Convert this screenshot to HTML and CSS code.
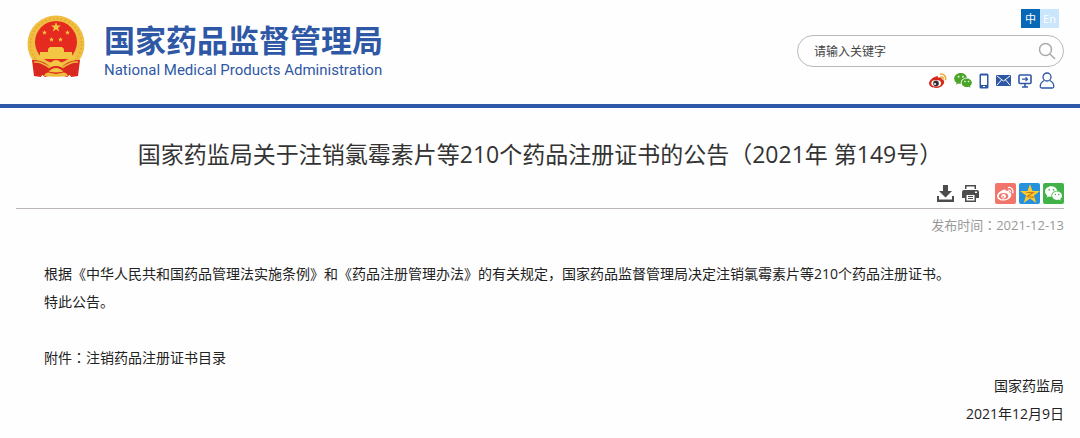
FILE: index.html
```
<!DOCTYPE html>
<html lang="zh-CN">
<head>
  <meta charset="UTF-8" />
  <meta name="viewport" content="width=device-width, initial-scale=1" />
  <title>国家药品监督管理局</title>
  <link rel="stylesheet" href="styles.css">
</head>
<body>

  <!-- Shared symbols -->
  <svg class="symbols" aria-hidden="true">
    <symbol id="star" viewBox="0 0 20 20">
      <path d="M10 0l2.500 7H20l-6 4.500 2.300 7.500L10 14.500 3.700 19 6 11.500 0 7h7.500z" />
    </symbol>
    <symbol id="wechat" viewBox="0 0 20 17">
      <path fill-rule="evenodd" d="M7.500 0C3.400 0 0 2.700 0 6.200c0 2 1.100 3.700 2.800 4.800L2 13.200l2.700-1.300c.9.300 1.900.4 2.900.4-.8-4 2.500-6.900 6.900-6.900C13.900 2.300 11 0 7.500 0zM5 3.200a1 1 0 110 2 1 1 0 010-2zm5 0a1 1 0 110 2 1 1 0 010-2z" />
      <path fill-rule="evenodd" d="M14.200 6.200c-3.300 0-5.800 2.200-5.800 4.900s2.500 4.900 5.800 4.900c.8 0 1.500-.1 2.200-.4l2.100 1.200-.6-2c1.300-.9 2.100-2.200 2.100-3.700 0-2.700-2.500-4.900-5.800-4.900zm-2 2.500a.9.900 0 110 1.800.9.900 0 010-1.800zm4 0a.9.900 0 110 1.800.9.900 0 010-1.800z" />
    </symbol>
  </svg>

  <!-- Header -->
  <header class="header">
    <a class="logo" href="#">
      <svg class="emblem" viewBox="7 5 58 62" aria-hidden="true">
        <path fill="#d9281f" d="M15 46l-1 20 7-2 4 3 11-3 11 3 4-3 7 2-1-20z" />
        <circle cx="36" cy="34" r="28.500" fill="#f0bf42" />
        <circle cx="36" cy="34" r="25.500" fill="none" stroke="#e5ae38" stroke-width="2" stroke-dasharray="2 2" />
        <circle cx="36" cy="32" r="21" fill="#e52a20" />
        <g fill="#f3c744">
          <use href="#star" x="31" y="12" width="10" height="10" />
          <use href="#star" x="22" y="20" width="5" height="5" />
          <use href="#star" x="45" y="20" width="5" height="5" />
          <use href="#star" x="29" y="27" width="5" height="5" />
          <use href="#star" x="38" y="27" width="5" height="5" />
          <path d="M28 39l2-2h12l2 2v3h8v4h3v3H17v-3h3v-4h8z" />
        </g>
        <path fill="#d9281f" d="M12 50c8 0 13 2 18 7l-4 6c-3 0-4 2-5 4l-7-1zM60 50c-8 0-13 2-18 7l4 6c3 0 4 2 5 4l7-1z" />
        <path fill="none" stroke="#eebb3c" stroke-width="1.500" d="M14 52c7-1 12 3 16 6M58 52c-7-1-12 3-16 6" />
        <circle cx="36" cy="56" r="6" fill="#f3c744" />
        <path fill="none" stroke="#d9281f" stroke-width="2" d="M27 62c3-4 6-5 9-5s6 1 9 5" />
        <path fill="#eebb3c" d="M24 66c1-4 5-4 7-3l5 1 5-1c2-1 6-1 7 3-6 1-18 1-24 0z" />
      </svg>
      <span class="logo-text">
        <span class="logo-cn">国家药品监督管理局</span>
        <span class="logo-en">National Medical Products Administration</span>
      </span>
    </a>

    <div class="tools">
      <div class="lang">
        <a class="active" href="#">中</a>
        <a href="#">En</a>
      </div>

      <form class="search">
        <input type="text" aria-label="请输入关键字" placeholder="请输入关键字">
        <button type="button" aria-label="搜索">
          <svg width="18" height="18" viewBox="0 0 18 18" fill="none" stroke="#aaa" stroke-width="1.500">
            <circle cx="7.500" cy="7.500" r="6" />
            <path d="M12 12l5 5" />
          </svg>
        </button>
      </form>

      <nav class="links">
        <a href="#" aria-label="微博">
          <svg width="18" height="16" viewBox="0 0 18 16">
            <path fill="#d4291e" d="M7 3.500c1.600-.6 2.600 0 2.300 1.400 2-.7 3.700-.5 3.500 1.300 2 .6 2.900 2 2.200 4C13.800 13.300 10.500 15 7 15c-3.600 0-6.800-1.700-7-4.700C0 7.500 3.700 4.500 7 3.500z" />
            <ellipse cx="7.200" cy="10.300" rx="4.800" ry="3.200" fill="#fff" />
            <circle cx="7" cy="10.400" r="2.800" fill="#3a3030" />
            <circle cx="6" cy="11" r="1" fill="#fff" />
            <path fill="none" stroke="#efaa36" stroke-width="1.500" d="M11 1.200c3.700-.8 6.600 2.300 5.400 6M11.500 3.700c1.900-.3 3.100 1 2.600 2.800" />
          </svg>
        </a>
        <a href="#" aria-label="微信">
          <svg width="18" height="15" fill="#4aa528"><use href="#wechat" /></svg>
        </a>
        <a href="#" aria-label="手机版">
          <svg width="10" height="16" viewBox="0 0 10 16">
            <rect width="9" height="15" x=".5" y=".5" rx="1.500" fill="#2e58a6" />
            <path fill="#fff" d="M2 2.500h6V12H2zM4 13h2v1H4z" />
          </svg>
        </a>
        <a href="#" aria-label="邮箱">
          <svg width="15" height="11" viewBox="0 0 15 11">
            <rect width="15" height="11" rx="1" fill="#2e58a6" />
            <path fill="none" stroke="#fff" d="M1 1l6.500 5L14 1M1 10l4.500-5M14 10L9.500 5" />
          </svg>
        </a>
        <a href="#" aria-label="电脑版">
          <svg width="14" height="14" viewBox="0 0 14 14" fill="none" stroke="#2e58a6">
            <rect x="1" y="1" width="12" height="8.500" rx="1" stroke-width="1.600" />
            <path stroke-width="1.200" d="M4 5.200h5M7.500 3.300l2 1.900-2 1.900" />
            <path stroke-width="1.600" d="M7 10v3M4 13h6" />
          </svg>
        </a>
        <a href="#" aria-label="个人中心">
          <svg width="16" height="17" viewBox="0 0 16 17" fill="none" stroke="#2e58a6" stroke-width="1.300">
            <circle cx="8" cy="5" r="4" />
            <path d="M5.300 8.500C2.500 9.800 1.200 12 1.200 14.500c0 1 .6 1.500 1.500 1.500h10.600c.9 0 1.500-.5 1.500-1.500 0-2.500-1.300-4.700-4.100-6" />
          </svg>
        </a>
      </nav>
    </div>
  </header>

  <!-- Article -->
  <main class="article">
    <h1>国家药监局关于注销氯霉素片等210个药品注册证书的公告（2021年 第149号）</h1>

    <div class="actions">
      <button type="button" aria-label="下载">
        <svg width="17" height="17" viewBox="0 0 17 17" fill="#4c4c4c">
          <path d="M6 0h5v6h4l-6.500 6.500L2 6h4z" />
          <path d="M0 11h2v3.500h13V11h2v6H0z" />
        </svg>
      </button>
      <button class="print" type="button" aria-label="打印">
        <svg width="17" height="17" viewBox="0 0 17 17">
          <path fill="#4c4c4c" d="M3 0h11v4H3zM2 5h13q2 0 2 2v6h-3v4H3v-4H0V7q0-2 2-2z" />
          <path fill="#fff" d="M4.500 1.500h8V4h-8zM4.500 10h8v5.500h-8zM13 6.500h2V8h-2z" />
          <path stroke="#4c4c4c" d="M6 11.500h5M6 13.500h5" />
        </svg>
      </button>
      <button class="share weibo" type="button" aria-label="分享到微博">
        <svg width="17" height="16" viewBox="0 0 18 16">
          <path fill="#fff" d="M7 3.500c1.600-.6 2.600 0 2.300 1.400 2-.7 3.700-.5 3.500 1.300 2 .6 2.900 2 2.200 4C13.800 13.300 10.500 15 7 15c-3.600 0-6.800-1.700-7-4.700C0 7.500 3.700 4.500 7 3.500z" />
          <ellipse cx="7" cy="10.300" rx="5" ry="3.300" fill="#f1756a" />
          <circle cx="7" cy="10.500" r="2.500" fill="#fff" />
          <circle cx="6.500" cy="11" r="1" fill="#f1756a" />
          <path fill="none" stroke="#fff" stroke-width="1.400" d="M11.500 1.200c3.700-.8 6.200 2.300 5 6M12 3.900c1.600-.3 2.500.8 2.100 2.300" />
        </svg>
      </button>
      <button class="share qzone" type="button" aria-label="分享到QQ空间">
        <svg width="20" height="20" viewBox="0 0 20 20">
          <use href="#star" fill="#fdc92e" />
          <path fill="none" stroke="#c77b16" stroke-width="1.200" d="M6.500 8.500H13L7.500 12.500q4 1 7 .5" />
        </svg>
      </button>
      <button class="share weixin" type="button" aria-label="分享到微信">
        <svg width="17" height="15" fill="#fff"><use href="#wechat" /></svg>
      </button>
    </div>

    <p class="date">发布时间<span class="colon" lang="zh-TW">：</span>2021-12-13</p>

    <div class="content">
      <p>根据《中华人民共和国药品管理法实施条例》和《药品注册管理办法》的有关规定，国家药品监督管理局决定注销氯霉素片等210个药品注册证书。</p>
      <p>特此公告。</p>
      <p class="attachment">附件<span class="colon" lang="zh-TW">：</span><a href="#">注销药品注册证书目录</a></p>
    </div>

    <div class="signature">
      <p>国家药监局</p>
      <p>2021年12月9日</p>
    </div>
  </main>

</body>
</html>
```

FILE: styles.css
```
body {
  margin: 0;
  font-family: "Open Sans", "Noto Sans CJK SC", sans-serif;
  font-size: 14px;
  color: #222;
  background: #fefefe;
}

a {
  color: inherit;
  text-decoration: none;
}

p {
  margin: 0;
}

svg {
  display: block;
}

button {
  padding: 0;
  border: none;
  background: none;
  cursor: pointer;
}

.symbols {
  display: none;
}

.header {
  display: flex;
  justify-content: space-between;
  align-items: flex-start;
  padding: 9px 16px 15px;
  border-bottom: 4px solid #2f59a8;
}

.logo {
  display: flex;
  gap: 19px;
  padding: 6px 0 0 11px;
  color: #2e58a6;
}

.emblem {
  width: 58px;
  height: 62px;
}

.logo-text {
  display: flex;
  flex-direction: column;
  padding-top: 5px;
  white-space: nowrap;
}

.logo-cn {
  font-family: "Noto Sans CJK SC", sans-serif;
  font-size: 31px;
  font-weight: bold;
  line-height: 38px;
}

.logo-en {
  font-family: Roboto, sans-serif;
  font-size: 15px;
  line-height: 24px;
}

.tools {
  width: 267px;
}

.lang {
  display: flex;
  justify-content: flex-end;
  padding-right: 5px;
}

.lang a {
  width: 19px;
  font-size: 11px;
  line-height: 19px;
  text-align: center;
  color: #fff;
  background: #c9e6fd;
}

.lang .active {
  background: #0868b5;
}

.search {
  display: flex;
  align-items: center;
  box-sizing: border-box;
  height: 32px;
  margin-top: 7px;
  padding: 0 7px 0 16px;
  border: 1px solid #b9b9c0;
  border-radius: 16px;
}

.search input {
  flex: 1;
  min-width: 0;
  padding: 0;
  border: none;
  outline: none;
  background: none;
  font-family: inherit;
  font-size: 12px;
}

.search input::placeholder {
  color: #444;
}

.links {
  display: flex;
  justify-content: flex-end;
  align-items: center;
  gap: 7px;
  height: 17px;
  margin-top: 5px;
  padding-right: 9px;
}

.article {
  padding: 28px 16px 10px;
}

h1 {
  margin: 0;
  font-size: 23px;
  font-weight: normal;
  line-height: 36px;
  text-align: center;
  color: #333;
}

.actions {
  display: flex;
  justify-content: flex-end;
  align-items: center;
  gap: 3px;
  margin-top: 11px;
  padding-bottom: 4px;
  border-bottom: 1px solid #bdb7bb;
}

.print {
  margin: 0 13px 0 5px;
}

.share {
  display: flex;
  justify-content: center;
  align-items: center;
  width: 21px;
  height: 21px;
  border-radius: 2px;
}

.weibo {
  background: #f1756a;
}

.qzone {
  background: #2492dc;
}

.weixin {
  background: #41b248;
}

.date {
  margin-top: 6px;
  font-size: 13px;
  line-height: 20px;
  text-align: right;
  color: #999;
}

/* the traditional face centres the full-width colon */
.colon {
  font-family: "Noto Sans CJK TC", sans-serif;
  line-height: 1;
}

.content {
  padding: 25px 28px 0;
  line-height: 28px;
}

.attachment {
  margin-top: 28px;
}

.signature {
  line-height: 28px;
  text-align: right;
}
```
